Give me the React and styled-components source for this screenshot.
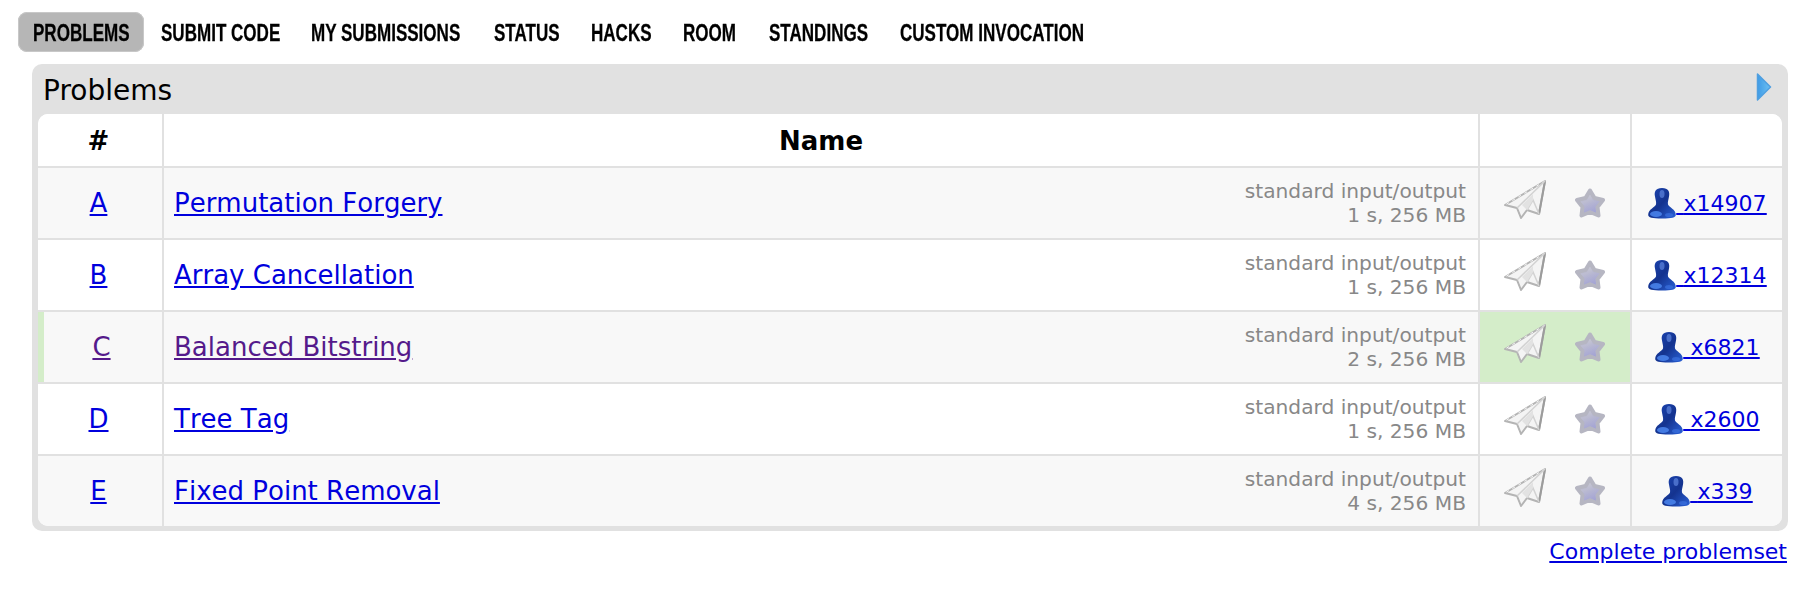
import React from 'react';
import styled, { createGlobalStyle } from 'styled-components';

const Global = createGlobalStyle`
  html, body { margin: 0; padding: 0; background: #fff; }
  body { font-family: "DejaVu Sans", Verdana, sans-serif; color: #000; }
  a { color: #0000dd; }
`

const Page = styled.div`
  width: 1810px;
  height: 594px;
  box-sizing: border-box;
  padding: 12px 22px 0 18px;
  overflow: hidden;
`

const Menu = styled.ul`
  display: flex;
  list-style: none;
  margin: 0 0 12px;
  padding: 0;
  height: 40px;
`

const MenuItem = styled.li`
  box-sizing: content-box;
  width: ${p => p.$w}px;
  height: 40px;
  line-height: 42px;
  padding: 0 15px;
  margin-right: 2px;
  border-radius: 9px;
  white-space: nowrap;
  background: ${p => (p.$active ? '#b6b6b6' : 'transparent')};
  box-shadow: ${p => (p.$active ? 'inset 0 0 0 1px #c8c8c8' : 'none')};
`

// no narrow face is installed, so the bold sans is squeezed to the menu's width
const MenuLabel = styled.span`
  display: inline-block;
  font-family: "Liberation Sans", Arial, sans-serif;
  font-weight: bold;
  font-size: 24px;
  color: #000;
  -webkit-text-stroke: 0.3px #000;
  transform: scaleX(0.71);
  transform-origin: left center;
`

const Panel = styled.section`
  position: relative;
  margin-left: 14px;
  background: #e1e1e1;
  border-radius: 10px;
  padding: 0 6px 5px;
`

const PanelTitle = styled.div`
  height: 50px;
  line-height: 54px;
  padding-left: 5px;
  font-size: 28px;
`

const Toggle = styled.svg`
  position: absolute;
  top: 9px;
  right: 16px;
  width: 16px;
  height: 28px;
  filter: blur(0.4px);
`

const Table = styled.table`
  width: 100%;
  border-collapse: separate;
  border-spacing: 0;
  table-layout: fixed;
  background: #fff;
  border-radius: 10px;
  overflow: hidden;
`

const Th = styled.th`
  padding: 2px ${p => p.$pad || '0'} 0 0;
  box-sizing: content-box;
  font-size: 26px;
  font-weight: bold;
  line-height: 30px;
  text-align: center;
  background: #fff;
  border-bottom: 2px solid #e1e1e1;
  border-right: ${p => (p.$last ? '0' : '2px solid #e1e1e1')};
  width: ${p => p.$w || 'auto'};
`

const HeadRow = styled.tr`
  height: 52px;
  th { height: 50px; }
`

const Td = styled.td`
  height: 70px;
  padding: 0;
  background: ${p => (p.$accepted ? '#d4edc9' : p.$odd ? '#f8f8f8' : '#fff')};
  border-bottom: ${p => (p.$end ? '0' : '2px solid #e1e1e1')};
  border-right: ${p => (p.$last ? '0' : '2px solid #e1e1e1')};
`

const IndexCell = styled(Td)`
  text-align: center;
  font-size: 26px;
  box-shadow: ${p => (p.$solved ? 'inset 6px 0 0 #d4edc9' : 'none')};
  padding-left: ${p => (p.$solved ? '6px' : '0')};
  padding-right: 3px;
`

const NameRow = styled.div`
  display: flex;
  align-items: center;
  justify-content: space-between;
  padding: 0 12px 0 10px;
`

const ProblemLink = styled.a`
  font-size: 26px;
  font-kerning: none;
  color: ${p => (p.$visited ? '#551a8b' : '#0000dd')};
`

const Limits = styled.div`
  text-align: right;
  font-size: 20.2px;
  line-height: 24px;
  color: #888;
`

const Actions = styled.div`
  display: flex;
  align-items: center;
  justify-content: center;
  gap: 27px;
`

const PlaneSvg = styled.svg`
  margin-bottom: 7px;
  filter: blur(0.3px);
`

const StarSvg = styled.svg`
  filter: blur(0.6px);
`

const UserSvg = styled.svg`
  filter: blur(0.5px);
`

const Solvers = styled.a`
  display: flex;
  align-items: center;
  justify-content: center;
  padding-left: 1px;
  font-size: 22px;
  color: #0000dd;
  span { text-decoration: underline; white-space: pre; }
`

const Footer = styled.div`
  text-align: right;
  padding: 8px 1px 0 0;
  font-size: 22px;
`

const PlaneIcon = () => (
  <PlaneSvg width="42" height="40" viewBox="0 0 42 40">
    <path d="M41 1 L1 25 L13 28 L17 38 L23 30 L35 34 Z" fill="#f4f4f4" stroke="#b4b4b4" strokeWidth="2" strokeLinejoin="round" />
    <path d="M41 1 L1 25" fill="none" stroke="#f4f4f4" strokeWidth="1" strokeDasharray="3 4" />
    <path d="M35 34 L41 1" fill="none" stroke="#9c9c9c" strokeWidth="2" />
    <path d="M41 1 L13 28 M23 30 L29 20 L35 34" fill="none" stroke="#d2d2d2" strokeWidth="1.5" />
    <path d="M18 25 L29 14 L29 20 L23 30 Z" fill="#e2e2e2" />
  </PlaneSvg>
)

const StarIcon = ({ id }) => (
  <StarSvg width="34" height="33" viewBox="0 0 34 33">
    <defs>
      <linearGradient id={id} x1="0.2" y1="0" x2="0.6" y2="1">
        <stop offset="0" stopColor="#cbcbd0" />
        <stop offset="0.55" stopColor="#b4b4d2" />
        <stop offset="1" stopColor="#a4a4d4" />
      </linearGradient>
    </defs>
    <path d="M17 3.5 L21.5 11 L30 13 L24.5 20 L25.5 28.5 L17 25 L8.5 28.5 L9.5 20 L4 13 L12.5 11 Z" fill={`url(#${id})`} stroke="#b6b6c2" strokeWidth="4" strokeLinejoin="round" />
    <path d="M17 8 L20 13.5 L26 15 L22 20 L22.8 25.5 L17 23 L11.2 25.5 L12 20 L8 15 L14 13.5 Z" fill={`url(#${id})`} />
  </StarSvg>
)

const UserIcon = ({ id }) => (
  <UserSvg width="28" height="32" viewBox="0 0 28 32">
    <defs>
      <linearGradient id={id} x1="0" y1="0" x2="1" y2="1">
        <stop offset="0" stopColor="#1c46b4" />
        <stop offset="0.5" stopColor="#14338f" />
        <stop offset="1" stopColor="#2a62d8" />
      </linearGradient>
    </defs>
    <path d="M14 1 C20.5 1 22 5 21 9.5 C20.4 13 19.5 15 20 17.5 C21 20.5 27.8 22 27.8 28 C27.8 30.5 24 31.5 14 31.5 C4 31.5 0.2 30.5 0.2 28 C0.2 22 7 20.5 8 17.5 C8.5 15 7.6 13 7 9.5 C6 5 7.5 1 14 1 Z" fill={`url(#${id})`} />
    <ellipse cx="14" cy="7" rx="2.5" ry="4" fill="#5f86de" opacity="0.7" />
    <ellipse cx="8" cy="27" rx="6" ry="3" fill="#4b86ee" opacity="0.85" />
    <ellipse cx="21" cy="28" rx="4" ry="2" fill="#3f76e4" opacity="0.6" />
  </UserSvg>
)

const problems = [
  { index: 'A', name: 'Permutation Forgery', time: '1 s, 256 MB', solved: 'x14907' },
  { index: 'B', name: 'Array Cancellation', time: '1 s, 256 MB', solved: 'x12314' },
  { index: 'C', name: 'Balanced Bitstring', time: '2 s, 256 MB', solved: 'x6821', accepted: true },
  { index: 'D', name: 'Tree Tag', time: '1 s, 256 MB', solved: 'x2600' },
  { index: 'E', name: 'Fixed Point Removal', time: '4 s, 256 MB', solved: 'x339' },
]

const tabs = [
  { label: 'PROBLEMS', width: 96 },
  { label: 'SUBMIT CODE', width: 118 },
  { label: 'MY SUBMISSIONS', width: 151 },
  { label: 'STATUS', width: 65 },
  { label: 'HACKS', width: 60 },
  { label: 'ROOM', width: 54 },
  { label: 'STANDINGS', width: 99 },
  { label: 'CUSTOM INVOCATION', width: 185 },
]

const App = () => (
  <Page>
    <Global />
    <Menu>
      {tabs.map((tab, i) => (
        <MenuItem key={tab.label} $w={tab.width} $active={i === 0}>
          <MenuLabel>{tab.label}</MenuLabel>
        </MenuItem>
      ))}
    </Menu>
    <Panel>
      <PanelTitle>Problems</PanelTitle>
      <Toggle viewBox="0 0 16 28">
        <defs>
          <linearGradient id="toggle" x1="0" y1="0" x2="1" y2="0">
            <stop offset="0" stopColor="#3f9be6" />
            <stop offset="1" stopColor="#6cc0f2" />
          </linearGradient>
        </defs>
        <path d="M1.5 1 L14.5 14 L1.5 27 Z" fill="url(#toggle)" stroke="#4f9fe0" strokeWidth="1.5" strokeLinejoin="round" />
      </Toggle>
      <Table>
        <thead>
          <HeadRow>
            <Th $w="121px" $pad="3px">#</Th>
            <Th>Name</Th>
            <Th $w="150px"></Th>
            <Th $w="150px" $last></Th>
          </HeadRow>
        </thead>
        <tbody>
          {problems.map((p, i) => {
            const odd = i % 2 === 0
            const end = i === problems.length - 1
            return (
              <tr key={p.index}>
                <IndexCell $odd={odd} $end={end} $solved={p.accepted}>
                  <ProblemLink href="#" $visited={p.accepted}>{p.index}</ProblemLink>
                </IndexCell>
                <Td $odd={odd} $end={end}>
                  <NameRow>
                    <ProblemLink href="#" $visited={p.accepted}>{p.name}</ProblemLink>
                    <Limits>standard input/output<br />{p.time}</Limits>
                  </NameRow>
                </Td>
                <Td $odd={odd} $end={end} $accepted={p.accepted}>
                  <Actions>
                    <PlaneIcon />
                    <StarIcon id={`star${i}`} />
                  </Actions>
                </Td>
                <Td $odd={odd} $end={end} $last>
                  <Solvers href="#">
                    <UserIcon id={`user${i}`} />
                    <span> {p.solved}</span>
                  </Solvers>
                </Td>
              </tr>
            )
          })}
        </tbody>
      </Table>
    </Panel>
    <Footer><a href="#">Complete problemset</a></Footer>
  </Page>
)

export default App;
